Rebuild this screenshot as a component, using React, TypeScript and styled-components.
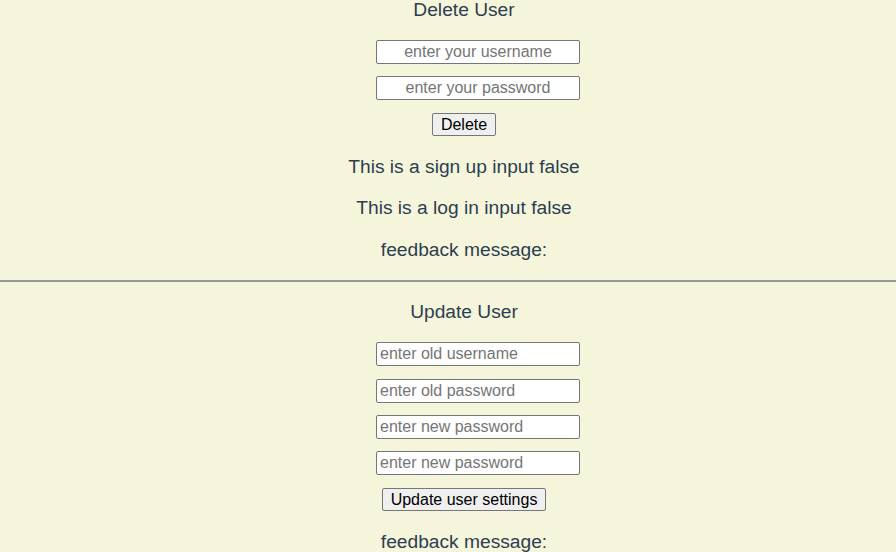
import React from "react";
import styled, { createGlobalStyle } from "styled-components";

const Global = createGlobalStyle`
  html, body { margin: 0; padding: 0; background: #f5f5dc; }
  body { font-family: "Liberation Sans", Arial, sans-serif; color: #2c3e50; overflow: hidden; }
`;

const Page = styled.div`
  width: 896px;
  height: 552px;
  overflow: hidden;
  background: #f5f5dc;
`;

const Section = styled.section`
  display: flex;
  flex-direction: column;
  align-items: center;
  padding-left: 32px;
`;

const Title = styled.div<{ $mt: number }>`
  font-size: 19.2px;
  line-height: 22px;
  margin-top: ${(p) => p.$mt}px;
`;

const Field = styled.input<{ $mt: number; $center?: boolean }>`
  box-sizing: border-box;
  width: 204px;
  height: 24px;
  margin: ${(p) => p.$mt}px 0 0 28px;
  padding: 1px 3px;
  border: 1px solid #767676;
  border-radius: 2px;
  background: #fff;
  font-family: "Liberation Sans", Arial, sans-serif;
  font-size: 16px;
  color: #000;
  text-align: ${(p) => (p.$center ? "center" : "left")};
  outline: none;
  &::placeholder { color: #757575; }
`;

const Button = styled.button<{ $mt: number }>`
  box-sizing: border-box;
  height: 23px;
  margin-top: ${(p) => p.$mt}px;
  padding: 0 8px;
  border: 1px solid #767676;
  border-radius: 2px;
  background: #efefef;
  font-family: "Liberation Sans", Arial, sans-serif;
  font-size: 16px;
  line-height: 20px;
  color: #000;
`;

const Message = styled.p<{ $mt: number }>`
  margin: ${(p) => p.$mt}px 0 0;
  font-size: 19.2px;
  line-height: 22px;
`;

const Rule = styled.hr`
  margin: 19px 0 0;
  border: none;
  border-top: 2px solid #999;
  height: 0;
`;

export default function App() {
  return (
    <Page>
      <Global />
      <Section>
        <Title $mt={-1}>Delete User</Title>
        <Field $mt={19} $center placeholder="enter your username" />
        <Field $mt={12} $center placeholder="enter your password" type="password" />
        <Button $mt={13}>Delete</Button>
        <Message $mt={20}>This is a sign up input false</Message>
        <Message $mt={19}>This is a log in input false</Message>
        <Message $mt={20}>feedback message:</Message>
      </Section>
      <Rule />
      <Section>
        <Title $mt={19}>Update User</Title>
        <Field $mt={19} placeholder="enter old username" />
        <Field $mt={13} placeholder="enter old password" type="password" />
        <Field $mt={12} placeholder="enter new password" type="password" />
        <Field $mt={12} placeholder="enter new password" type="password" />
        <Button $mt={13}>Update user settings</Button>
        <Message $mt={20}>feedback message:</Message>
      </Section>
    </Page>
  );
}
